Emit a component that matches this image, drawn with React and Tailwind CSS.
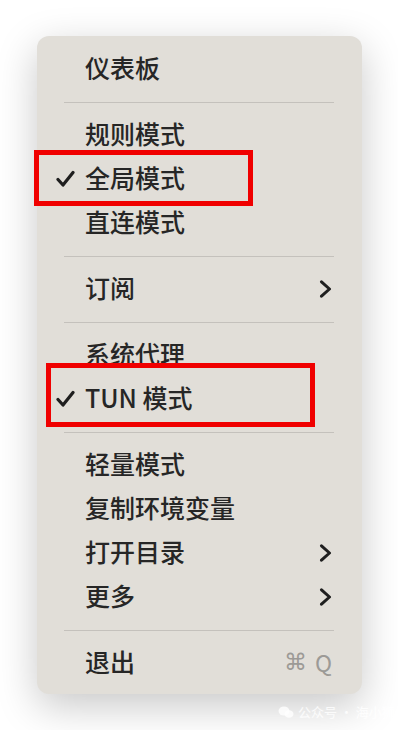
import React from 'react';

const font = { fontFamily: '"Noto Sans CJK SC", "Noto Sans", sans-serif' };

function Check() {
  return (
    <svg width="19" height="18" viewBox="0 0 19 18" fill="none">
      <path d="M2 9.5 L7 15 L17 2.5" stroke="#1f1f1f" strokeWidth="3.2" strokeLinecap="round" strokeLinejoin="round" />
    </svg>
  );
}

function Chevron() {
  return (
    <svg width="13" height="18" viewBox="0 0 13 18" fill="none">
      <path d="M2.5 1.8 L10.5 9 L2.5 16.2" stroke="#1f1f1f" strokeWidth="3" strokeLinecap="round" strokeLinejoin="round" />
    </svg>
  );
}

function Item({ label, checked, submenu, shortcut }) {
  return (
    <div className="h-[44px] flex items-center pr-[30px]">
      <div className="w-[48px] pl-[19px] flex items-center">{checked && <Check />}</div>
      <div className="flex-1 pb-[3px] text-[25px] font-medium leading-none text-[#262626]">{label}</div>
      {submenu && <Chevron />}
      {shortcut && (
        <div className="flex items-center gap-[8px] pb-[2px] text-[#9c9a96] text-[23px] leading-none">
          <span style={{ fontFamily: '"DejaVu Sans", sans-serif' }}>⌘</span>
          <span>Q</span>
        </div>
      )}
    </div>
  );
}

function Separator() {
  return (
    <div className="h-[22px] flex items-center pl-[27px] pr-[28px]">
      <div className="h-px w-full bg-[#c4c1bc]" />
    </div>
  );
}

export default function App() {
  return (
    <div className="relative w-[398px] h-[730px] overflow-hidden bg-white pt-[36px] pl-[37px]" style={font}>
      <div className="w-[325px] rounded-[12px] bg-[#e1ded8] pt-[11px] pb-[9px] shadow-[0_12px_40px_rgba(0,0,0,0.22)]">
        <Item label="仪表板" />
        <Separator />
        <Item label="规则模式" />
        <Item label="全局模式" checked />
        <Item label="直连模式" />
        <Separator />
        <Item label="订阅" submenu />
        <Separator />
        <Item label="系统代理" />
        <Item label="TUN 模式" checked />
        <Separator />
        <Item label="轻量模式" />
        <Item label="复制环境变量" />
        <Item label="打开目录" submenu />
        <Item label="更多" submenu />
        <Separator />
        <Item label="退出" shortcut />
      </div>

      {/* annotation boxes */}
      <div className="absolute left-[34px] top-[150px] w-[219px] h-[56px] border-[5px] border-[#f00000]" />
      <div className="absolute left-[46px] top-[363px] w-[269px] h-[64px] border-[5px] border-[#f00000]" />

      {/* watermark */}
      <div className="absolute left-[278px] top-[702px] flex items-center gap-[4px] text-[13px] text-white/80 whitespace-nowrap">
        <svg width="16" height="14" viewBox="0 0 16 14" fill="none">
          <ellipse cx="6" cy="6" rx="5.5" ry="4.5" fill="white" fillOpacity="0.8" />
          <ellipse cx="11" cy="9" rx="4.5" ry="3.8" fill="white" fillOpacity="0.8" />
        </svg>
        <span>公众号 · 海小狮</span>
      </div>
    </div>
  );
}
